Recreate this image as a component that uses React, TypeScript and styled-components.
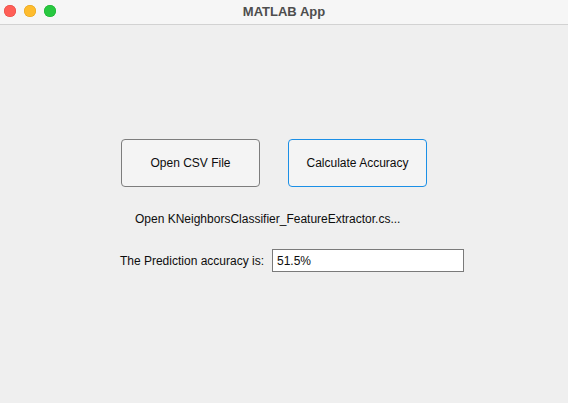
import React from 'react';
import styled, { createGlobalStyle } from 'styled-components';

const GlobalStyle = createGlobalStyle`
  html, body {
    margin: 0;
    padding: 0;
    background: #efefef;
  }
  body {
    font-family: 'Liberation Sans', Arial, Helvetica, sans-serif;
    font-size: 12px;
    color: #0d0d0d;
  }
`;

const Window = styled.div`
  width: 568px;
  height: 403px;
  display: flex;
  flex-direction: column;
  background: #efefef;
  overflow: hidden;
`;

// macOS 標題列
const TitleBar = styled.div`
  position: relative;
  height: 24px;
  flex: none;
  display: flex;
  align-items: center;
  justify-content: center;
  background: #f6f6f6;
  border-bottom: 1px solid #d2d2d2;
`;

const Lights = styled.div`
  position: absolute;
  left: 4px;
  top: 5px;
  display: flex;
  gap: 8px;
`;

const Light = styled.span<{ $color: string; $edge: string }>`
  width: 12px;
  height: 12px;
  border-radius: 50%;
  background: ${(p) => p.$color};
  box-shadow: inset 0 0 0 0.5px ${(p) => p.$edge};
`;

const Title = styled.div`
  font-size: 13px;
  font-weight: 700;
  color: #4d4d4d;
  margin-top: -2px;
`;

const Content = styled.div`
  flex: 1;
  display: flex;
  flex-direction: column;
  padding-top: 114px;
`;

const ButtonRow = styled.div`
  display: flex;
  gap: 28px;
  padding-left: 121px;
`;

const PushButton = styled.button<{ $focused?: boolean }>`
  box-sizing: border-box;
  width: 139px;
  height: 48px;
  border-radius: 4px;
  border: 1px solid ${(p) => (p.$focused ? '#1b8fe6' : '#7d7d7d')};
  background: #f4f4f4;
  font-family: inherit;
  font-size: 12px;
  color: #0d0d0d;
  padding: 0;
  outline: none;
`;

const FileLabel = styled.div`
  margin-top: 25px;
  padding-left: 135px;
  line-height: 14px;
  white-space: nowrap;
`;

const AccuracyRow = styled.div`
  margin-top: 23px;
  display: flex;
  align-items: center;
  gap: 8px;
  padding-left: 98px;
`;

const FieldLabel = styled.div`
  width: 166px;
  text-align: right;
  white-space: nowrap;
  line-height: 14px;
`;

const ValueField = styled.input`
  box-sizing: border-box;
  width: 192px;
  height: 23px;
  border: 1px solid #7a7a7a;
  background: #ffffff;
  padding: 0 0 0 4px;
  font-family: inherit;
  font-size: 12px;
  color: #0d0d0d;
  outline: none;
`;

export default function App() {
  return (
    <>
      <GlobalStyle />
      <Window>
        <TitleBar>
          <Lights>
            <Light $color='#ff5f57' $edge='#e2463f' />
            <Light $color='#febc2e' $edge='#e1a116' />
            <Light $color='#28c840' $edge='#14ae2c' />
          </Lights>
          <Title>MATLAB App</Title>
        </TitleBar>
        <Content>
          <ButtonRow>
            <PushButton>Open CSV File</PushButton>
            <PushButton $focused>Calculate Accuracy</PushButton>
          </ButtonRow>
          <FileLabel>Open KNeighborsClassifier_FeatureExtractor.cs...</FileLabel>
          <AccuracyRow>
            <FieldLabel>The Prediction accuracy is:</FieldLabel>
            <ValueField readOnly value='51.5%' />
          </AccuracyRow>
        </Content>
      </Window>
    </>
  );
}
